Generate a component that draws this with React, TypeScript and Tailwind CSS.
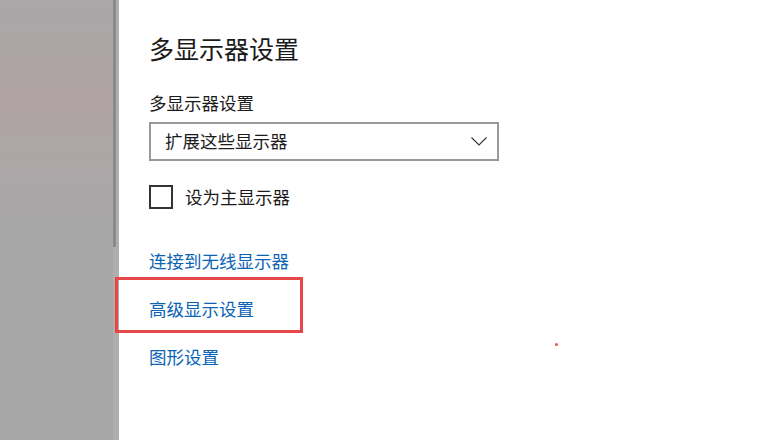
const CJK = "font-['Microsoft_YaHei','Noto_Sans_CJK_SC',sans-serif]";

const LINKS = ["连接到无线显示器", "高级显示设置", "图形设置"];

export default function App() {
  return (
    <div className={`relative flex w-[774px] h-[440px] overflow-hidden bg-white ${CJK}`}>
      {/* blurred window behind */}
      <div className="w-[113px] h-full bg-[linear-gradient(180deg,#a9a7a8_0%,#b0a3a4_22%,#aca6a7_38%,#a7a7a7_55%,#a7a7a7_100%)]" />

      {/* scrollbar */}
      <div className="flex w-[6px] h-full bg-[#aeaeae]">
        <div className="w-[3px] h-[247px] bg-[#8b898a]" />
      </div>

      {/* settings page */}
      <div className="flex flex-col pl-[30px] pt-[34px] text-[#1b1b1b]">
        <h1 className="text-[25px] leading-[28px] font-normal">多显示器设置</h1>

        <div className="mt-[30px] text-[17.5px] leading-[22px]">多显示器设置</div>

        <div className="mt-[8px] flex items-center justify-between w-[350px] h-[39px] border-2 border-[#999999] pl-[14px] pr-[10px] text-[17.5px]">
          <span>扩展这些显示器</span>
          <svg width="16" height="9" viewBox="0 0 16 9" fill="none" stroke="#333" strokeWidth="1.1">
            <path d="M0.5 0.5 L8 8 L15.5 0.5" />
          </svg>
        </div>

        <label className="mt-[24px] flex items-center gap-[12px] h-[24px] text-[17.5px]">
          <span className="w-[24px] h-[24px] border-2 border-[#333333] bg-white" />
          设为主显示器
        </label>

        <div className="mt-[40px] flex flex-col gap-[24px]">
          {LINKS.map(l => (
            <a key={l} className="text-[17.5px] leading-[24px] text-[#0b64b6] cursor-pointer">{l}</a>
          ))}
        </div>
      </div>

      {/* annotation */}
      <div className="absolute left-[115px] top-[277px] w-[188px] h-[56px] border-[3px] border-[#e8474a]" />
      <div className="absolute left-[555px] top-[343px] w-[3px] h-[3px] bg-[#d9534f] rounded-full" />
    </div>
  );
}
